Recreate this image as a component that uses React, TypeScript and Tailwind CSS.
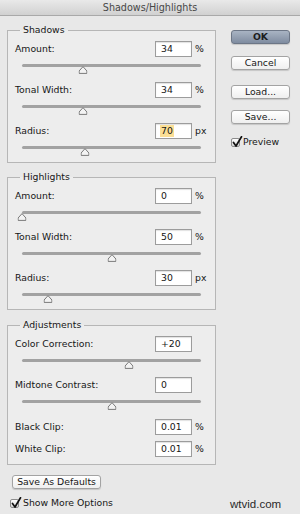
import type { ReactNode } from 'react'

type Item = {
  label: string
  value: string
  unit?: string
  pos?: number
  selected?: boolean
}

const shadows: Item[] = [
  { label: 'Amount:', value: '34', unit: '%', pos: 0.34 },
  { label: 'Tonal Width:', value: '34', unit: '%', pos: 0.34 },
  { label: 'Radius:', value: '70', unit: 'px', pos: 0.35, selected: true },
]

const highlights: Item[] = [
  { label: 'Amount:', value: '0', unit: '%', pos: 0 },
  { label: 'Tonal Width:', value: '50', unit: '%', pos: 0.5 },
  { label: 'Radius:', value: '30', unit: 'px', pos: 0.146 },
]

const adjustments: Item[] = [
  { label: 'Color Correction:', value: '+20', pos: 0.6 },
  { label: 'Midtone Contrast:', value: '0', pos: 0.5 },
]

function Checkbox() {
  return (
    <span className="relative inline-block h-[9px] w-[9px] rounded-[2px] border border-[#8c8c8c] bg-gradient-to-b from-white to-[#d8d8d8]">
      <svg className="absolute -top-[3px] left-[0px]" width="11" height="12" viewBox="0 0 11 12">
        <path d="M1.5 6.5 L4 10 L9.5 0.8" fill="none" stroke="#111" strokeWidth="1.7" strokeLinecap="round" strokeLinejoin="round" />
      </svg>
    </span>
  )
}

function Thumb() {
  return (
    <svg width="9" height="8" viewBox="0 0 9 8">
      <path d="M4.5 0.6 L8.4 5 L8.4 7.4 L0.6 7.4 L0.6 5 Z" fill="#f3f3f3" stroke="#7a7a7a" strokeWidth="1" strokeLinejoin="round" />
    </svg>
  )
}

function Slider({ pos }: { pos: number }) {
  return (
    <div className="h-[23px] pt-[7px]">
      <div className="relative ml-[7px] mr-[10px] h-[3px] rounded-full bg-[#a2a2a2]">
        <div className="absolute top-[2px] -translate-x-1/2" style={{ left: `${pos * 100}%` }}>
          <Thumb />
        </div>
      </div>
    </div>
  )
}

function Row({ item }: { item: Item }) {
  return (
    <div className="flex h-[16px] items-center">
      <span className="flex-1">{item.label}</span>
      <div className="flex h-[16px] w-[37px] items-center border border-[#9c9c9c] bg-white pl-[5px] shadow-[inset_0_1px_1px_rgba(0,0,0,0.12)]">
        <span className={item.selected ? 'bg-[#fbdf95] px-[1px] -ml-[1px] leading-[12px]' : ''}>{item.value}</span>
      </div>
      <span className="ml-[3px] w-[16px]">{item.unit}</span>
    </div>
  )
}

function Group({ title, children, className = '' }: { title: string; children: ReactNode; className?: string }) {
  return (
    <fieldset className={`w-[209px] border border-[#b6b6b6] bg-[#ededed] pl-[7px] pr-[4px] ${className}`}>
      <legend className="ml-[5px] px-[3px] leading-[12px]">{title}</legend>
      <div className="flex flex-col gap-[2px] pt-[5px]">{children}</div>
    </fieldset>
  )
}

function Button({ children, primary = false, className = '' }: { children: ReactNode; primary?: boolean; className?: string }) {
  return (
    <div
      className={`flex h-[14px] items-center justify-center rounded-[3px] border shadow-[0_1px_1px_rgba(0,0,0,0.15)] ${
        primary
          ? 'border-[#6c7686] bg-gradient-to-b from-[#a9b4c3] to-[#7f8ca0] font-bold text-[#1d1d1d]'
          : 'border-[#a3a3a3] bg-gradient-to-b from-white to-[#efefef]'
      } ${className}`}
    >
      {children}
    </div>
  )
}

export default function App() {
  return (
    <div className="relative h-[514px] w-[300px] overflow-hidden bg-[#e8e8e8] font-['DejaVu_Sans',sans-serif] text-[9.3px] text-[#161616]">
      <div className="h-[16px] border-b border-[#a9a9a9] bg-gradient-to-b from-[#e9e9e9] to-[#d1d1d1] text-center text-[9.6px] leading-[15px] text-[#474747]">
        Shadows/Highlights
      </div>

      <div className="flex pt-[8px]">
        <div className="ml-[7px] flex w-[209px] flex-col">
          <Group title="Shadows">
            {shadows.map((item) => (
              <div key={item.label}>
                <Row item={item} />
                <Slider pos={item.pos ?? 0} />
              </div>
            ))}
          </Group>

          <Group title="Highlights" className="mt-[8px]">
            {highlights.map((item) => (
              <div key={item.label}>
                <Row item={item} />
                <Slider pos={item.pos ?? 0} />
              </div>
            ))}
          </Group>

          <Group title="Adjustments" className="mt-[9px] pb-[7px]">
            {adjustments.map((item) => (
              <div key={item.label}>
                <Row item={item} />
                <Slider pos={item.pos ?? 0} />
              </div>
            ))}
            <div className="mt-[1px] flex flex-col gap-[6px]">
              <Row item={{ label: 'Black Clip:', value: '0.01', unit: '%' }} />
              <Row item={{ label: 'White Clip:', value: '0.01', unit: '%' }} />
            </div>
          </Group>

          <Button className="ml-[5px] mt-[10px] w-[89px]">Save As Defaults</Button>

          <div className="ml-[3px] mt-[8px] flex h-[12px] items-center gap-[4px]">
            <Checkbox />
            <span>Show More Options</span>
          </div>
        </div>

        <div className="ml-[15px] flex w-[59px] flex-col pt-[6px]">
          <Button primary>OK</Button>
          <Button className="mt-[12px]">Cancel</Button>
          <Button className="mt-[15px]">Load...</Button>
          <Button className="mt-[11px]">Save...</Button>
          <div className="mt-[13px] flex h-[10px] items-center gap-[3px]">
            <Checkbox />
            <span>Preview</span>
          </div>
        </div>
      </div>

      <span className="absolute left-[230px] top-[496px] font-['Liberation_Sans',sans-serif] text-[11.5px] text-[#2a2a2a]">
        wtvid.com
      </span>
    </div>
  )
}
